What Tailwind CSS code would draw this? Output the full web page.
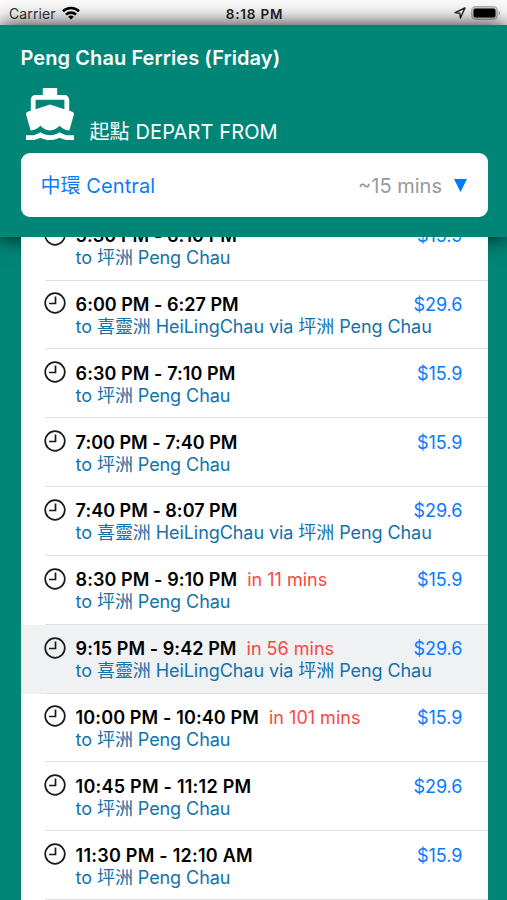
<!DOCTYPE html>
<html lang="en">
  <head>
    <meta charset="UTF-8" />
    <meta name="viewport" content="width=device-width, initial-scale=1.0" />
    <title>Peng Chau Ferries</title>
    <script src="https://cdn.jsdelivr.net/npm/@tailwindcss/browser@4"></script>
  </head>
  <body
    class="flex h-screen flex-col overflow-hidden bg-[#018576] font-['Inter','Noto_Sans_CJK_TC',sans-serif]"
  >
    <!-- status bar -->
    <div
      class="grid h-[25px] shrink-0 grid-cols-3 items-center bg-[#fafafa] pt-[3px] pr-[6px] pl-[9px] text-[14px]"
    >
      <div class="flex items-center gap-[6px] text-[#333]">
        <span class="-mt-[2px] tracking-[0.1px]">Carrier</span>
        <svg class="-mt-[2px] h-[14px] w-[18px]" viewBox="0 0 18 14" fill="none" stroke="#000" stroke-width="2.6">
          <path d="M1 5.3a11.4 11.4 0 0 1 16 0" />
          <path d="M4 8.6a7.2 7.2 0 0 1 10 0" />
          <path d="M9 13.6L6.2 10.8a4 4 0 0 1 5.6 0z" fill="#000" stroke="none" />
        </svg>
      </div>
      <span class="pr-[1px] text-center text-[13.5px] font-semibold tracking-[0.8px] text-[#222]">8:18 PM</span>
      <div class="-mt-[2px] flex items-center justify-end gap-[5px]">
        <svg class="h-[12px] w-[12px]" viewBox="0 0 12 12" fill="none" stroke="#222" stroke-width="1.4" stroke-linejoin="round">
          <path d="M11 1L1 5.600l4.800.6.6 4.800z" />
        </svg>
        <svg class="h-[14px] w-[30px]" viewBox="0 0 30 14">
          <rect x=".6" y=".6" width="25.8" height="12.8" rx="4" fill="#ccc" stroke="#aaa" stroke-width="1" />
          <rect x="2.5" y="2.5" width="22" height="9" rx="2" fill="#000" />
          <path d="M27.8 4.8a2.6 2.6 0 0 1 0 4.4z" fill="#999" />
        </svg>
      </div>
    </div>

    <header
      class="relative z-10 h-[211.5px] shrink-0 bg-[#018576] pt-[18px] pr-[19px] pl-[20.5px] text-white shadow-[0_0_20px_0_rgba(0,0,0,0.9)]"
    >
      <h1 class="text-[20px] leading-[30px] font-semibold tracking-[0.08px]">Peng Chau Ferries (Friday)</h1>
      <div class="flex h-[80px] items-end pb-[9px]">
        <svg class="mb-[4px] ml-[5px] h-[52px] w-[48px] shrink-0" viewBox="2 1 20 22" preserveAspectRatio="none" fill="#fff">
          <path
            d="M20 21c-1.390 0-2.780-.47-4-1.320-2.440 1.710-5.560 1.710-8 0C6.780 20.530 5.390 21 4 21H2v2h2c1.380 0 2.740-.35 4-.99 2.520 1.290 5.480 1.290 8 0 1.260.65 2.620.99 4 .99h2v-2h-2zM3.950 19H4c1.600 0 3.020-.88 4-2 .98 1.120 2.400 2 4 2s3.020-.88 4-2c.98 1.120 2.400 2 4 2h.05l1.890-6.680c.08-.26.06-.54-.06-.78s-.34-.42-.6-.5L20 10.620V6c0-1.100-.9-2-2-2h-3V1H9v3H6c-1.100 0-2 .9-2 2v4.620l-1.290.42c-.26.08-.48.26-.6.5s-.15.52-.06.78L3.950 19zM6 6h12v3.970L12 8 6 9.970V6z"
          />
        </svg>
        <span class="ml-[16px] text-[20px] leading-[24px] tracking-[0.12px] whitespace-nowrap">起點 DEPART FROM</span>
      </div>
      <div class="flex h-[64px] items-center rounded-[9px] bg-white pt-[2px] pr-[21px] pl-[20px] text-[20px] leading-[24px]">
        <span class="tracking-[0.08px] text-[#087aff]">中環 Central</span>
        <span class="ml-auto text-[#999]">~15 mins</span>
        <svg class="mb-[1px] ml-[12px] h-[13px] w-[13px]" viewBox="0 0 13 13">
          <path d="M0 0h13l-6.500 13z" fill="#007aff" />
        </svg>
      </div>
    </header>

    <!-- the list sits above the header's shadow -->
    <main class="relative z-20 min-h-0 flex-1 overflow-hidden px-[20.5px]">
      <ul id="ferries" class="-mt-[24.7px] w-[467px] bg-white"></ul>
    </main>

    <template id="row">
      <li class="flex h-[68.840px] pl-[24px]">
        <div class="flex min-w-0 flex-1 border-b border-[#dfe1e4] pt-[13.300px] pr-[25px]">
          <svg class="-mt-[1.500px] -ml-[0.500px] h-[22px] w-[22px] shrink-0" viewBox="0 0 22 22" fill="none" stroke="#1a1a1a" stroke-width="1.7">
            <circle cx="11" cy="11" r="9.800" />
            <path d="M11.500 4.500v7h-6.500" />
          </svg>
          <div class="min-w-0 flex-1 pl-[9.600px] whitespace-nowrap">
            <div class="flex gap-[10px] text-[18px] leading-[22px]">
              <span class="time font-semibold text-black"></span>
              <span class="wait text-[#f8483f]"></span>
            </div>
            <div class="dest text-[18px] leading-[22px] tracking-[-0.07px] text-[#1272aa]"></div>
          </div>
          <span class="fare text-[18px] leading-[22px] text-[#087aff]"></span>
        </div>
      </li>
    </template>

    <script>
      const PC = "to 坪洲 Peng Chau";
      const HLC = "to 喜靈洲 HeiLingChau via 坪洲 Peng Chau";

      const ferries = [
        { time: "5:30 PM - 6:10 PM", dest: PC, fare: "$15.9" },
        { time: "6:00 PM - 6:27 PM", dest: HLC, fare: "$29.6" },
        { time: "6:30 PM - 7:10 PM", dest: PC, fare: "$15.9" },
        { time: "7:00 PM - 7:40 PM", dest: PC, fare: "$15.9" },
        { time: "7:40 PM - 8:07 PM", dest: HLC, fare: "$29.6" },
        { time: "8:30 PM - 9:10 PM", dest: PC, fare: "$15.9", wait: "in 11 mins" },
        { time: "9:15 PM - 9:42 PM", dest: HLC, fare: "$29.6", wait: "in 56 mins", active: true },
        { time: "10:00 PM - 10:40 PM", dest: PC, fare: "$15.9", wait: "in 101 mins" },
        { time: "10:45 PM - 11:12 PM", dest: PC, fare: "$29.6" },
        { time: "11:30 PM - 12:10 AM", dest: PC, fare: "$15.9" },
      ];

      const list = document.getElementById("ferries");
      ferries.forEach((f) => {
        const row = document.getElementById("row").content.cloneNode(true);
        const time = row.querySelector(".time");
        time.textContent = f.time;
        // the digit 1 is narrow, open the line up a little for each one
        const ones = f.time.split("1").length - 1;
        time.style.letterSpacing = (0.3 + ones * 1.05) / f.time.length + "px";
        row.querySelector(".wait").textContent = f.wait || "";
        row.querySelector(".dest").textContent = f.dest;
        row.querySelector(".fare").textContent = f.fare;
        if (f.active) row.querySelector("li").classList.add("bg-[#eff1f3]");
        list.append(row);
      });
    </script>
  </body>
</html>
